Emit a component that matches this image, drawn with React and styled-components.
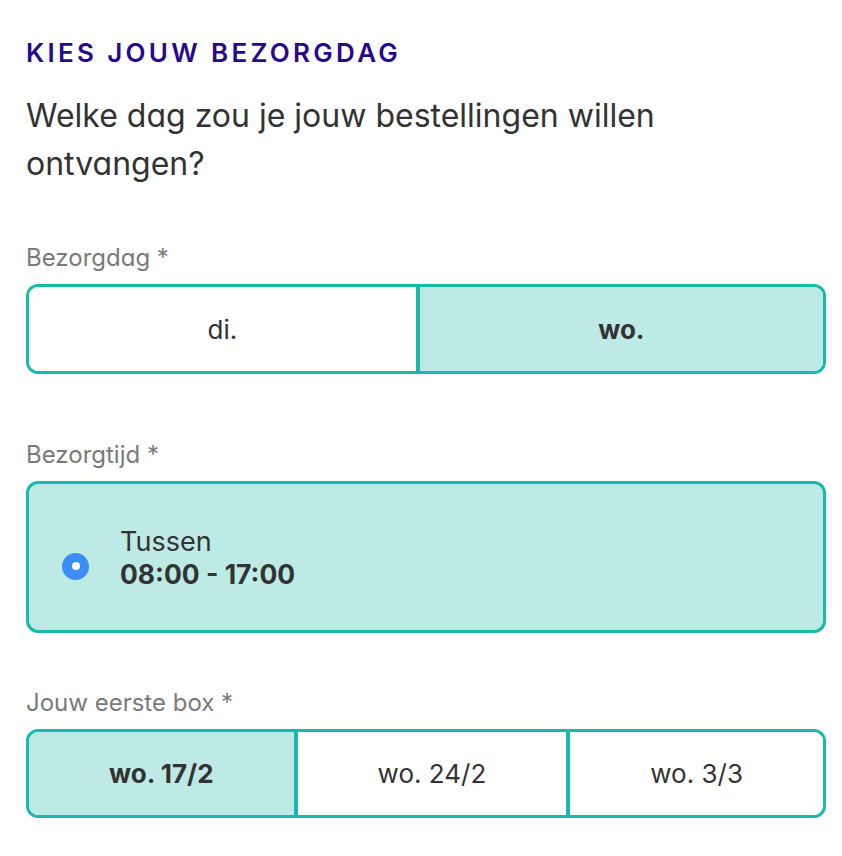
import React, { useState } from "react";
import styled, { createGlobalStyle } from "styled-components";

const Global = createGlobalStyle`
  html, body { margin: 0; padding: 0; background: #fff; }
  body {
    font-family: Inter, "Noto Sans", sans-serif;
    font-feature-settings: "cv11" 1;
    color: #333;
  }
`;

const TEAL = "#19b9ab";
const FILL = "#bdeae5";

const Page = styled.div`
  padding: 38px 16px 40px 26px;
`;

const Title = styled.h2`
  margin: 0;
  font-size: 26px;
  line-height: 30px;
  font-weight: 600;
  letter-spacing: 3.3px;
  color: #28088c;
  text-transform: uppercase;
`;

const Question = styled.p`
  margin: 24px 0 0;
  max-width: 690px;
  font-size: 32px;
  line-height: 48px;
  font-weight: 400;
  color: #333;
`;

const Field = styled.div`
  margin-top: ${(p) => p.$top}px;
`;

const Label = styled.div`
  font-size: 24px;
  line-height: 28px;
  color: #7a7a7a;
  margin-bottom: 12px;
`;

const Segmented = styled.div`
  display: flex;
  height: ${(p) => p.$h}px;
  border: 3px solid ${TEAL};
  border-radius: 12px;
  overflow: hidden;
  box-sizing: border-box;
`;

const Segment = styled.button`
  flex: 1 1 auto;
  border: 0;
  border-left: ${(p) => (p.$first ? "0" : `4px solid ${TEAL}`)};
  margin: 0;
  padding: 0 20px;
  background: ${(p) => (p.$active ? FILL : "#fff")};
  font-family: inherit;
  font-feature-settings: "cv11" 1;
  font-size: 26px;
  font-weight: ${(p) => (p.$active ? 700 : 400)};
  color: #333;
  cursor: pointer;
`;

const OptionCard = styled.div`
  display: flex;
  align-items: center;
  height: 152px;
  box-sizing: border-box;
  border: 3px solid ${TEAL};
  border-radius: 12px;
  background: ${FILL};
  padding-left: 33px;
  gap: 31px;
`;

const Radio = styled.span`
  width: 27px;
  height: 27px;
  margin-top: 18px;
  border-radius: 50%;
  background: #3a8ef5;
  display: flex;
  align-items: center;
  justify-content: center;
  flex: none;
  &::after {
    content: "";
    width: 8px;
    height: 8px;
    border-radius: 50%;
    background: #fff;
  }
`;

const OptionText = styled.div`
  font-size: 27px;
  line-height: 33px;
  color: #333;
  margin-top: 2px;
`;

const Strong = styled.div`
  font-weight: 700;
  font-size: 26.5px;
`;

export default function App() {
  const [day, setDay] = useState("wo.");
  const [box, setBox] = useState("wo. 17/2");
  const days = ["di.", "wo."];
  const boxes = ["wo. 17/2", "wo. 24/2", "wo. 3/3"];
  return (
    <Page>
      <Global />
      <Title>Kies jouw bezorgdag</Title>
      <Question>Welke dag zou je jouw bestellingen willen ontvangen?</Question>

      <Field $top={56}>
        <Label>Bezorgdag *</Label>
        <Segmented $h={90}>
          {days.map((d, i) => (
            <Segment
              key={d}
              $first={i === 0}
              $active={day === d}
              onClick={() => setDay(d)}
            >
              {d}
            </Segment>
          ))}
        </Segmented>
      </Field>

      <Field $top={67}>
        <Label>Bezorgtijd *</Label>
        <OptionCard>
          <Radio />
          <OptionText>
            Tussen
            <Strong>08:00 - 17:00</Strong>
          </OptionText>
        </OptionCard>
      </Field>

      <Field $top={56}>
        <Label>Jouw eerste box *</Label>
        <Segmented $h={89}>
          {boxes.map((b, i) => (
            <Segment
              key={b}
              $first={i === 0}
              $active={box === b}
              onClick={() => setBox(b)}
            >
              {b}
            </Segment>
          ))}
        </Segmented>
      </Field>
    </Page>
  );
}
